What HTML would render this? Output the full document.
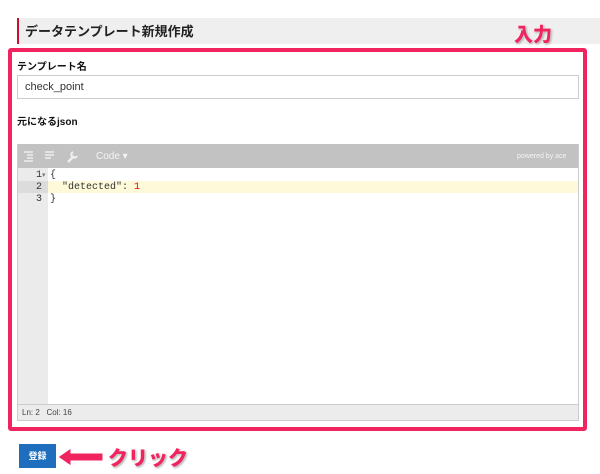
<!DOCTYPE html>
<html><head><meta charset="utf-8"><style>
body{margin:0;width:600px;height:474px;background:#fff;font-family:"Liberation Sans","Noto Sans CJK JP",sans-serif;position:relative;overflow:hidden}
.a{position:absolute}
</style></head><body>
<div class="a" style="left:17px;top:18px;width:583px;height:26px;background:#efefef;border-left:2px solid #c8102e;box-sizing:border-box"></div>
<div class="a" style="left:25px;top:21px;font-size:13px;font-weight:bold;color:#222">データテンプレート新規作成</div>
<div class="a" style="left:514px;top:20px;font-size:19px;font-weight:900;color:#f0245f;text-shadow:0 0 2px #fff,1px 1px 2px #888">入力</div>
<div class="a" style="left:8px;top:48px;width:579px;height:383px;border:4px solid #f0245f;border-radius:3px;box-sizing:border-box"></div>
<div class="a" style="left:17px;top:58px;font-size:10px;font-weight:bold;color:#111">テンプレート名</div>
<div class="a" style="left:17px;top:75px;width:562px;height:24px;border:1px solid #ccc;box-sizing:border-box;font-size:11px;color:#333;padding:5px 0 0 7px">check_point</div>
<div class="a" style="left:17px;top:113px;font-size:10px;font-weight:bold;color:#111">元になるjson</div>
<div class="a" style="left:17px;top:144px;width:562px;height:277px;border:1px solid #ccc;box-sizing:border-box;background:#fff"></div>
<div class="a" style="left:18px;top:144px;width:560px;height:24px;background:#c2c2c2"></div>
<svg class="a" style="left:22px;top:149px" width="60" height="14"><g stroke="#eee" stroke-width="1.5" fill="none"><path d="M2 3h9M5 6h6M5 9h6M2 12h9"/><path d="M23 3h9M23 6h9M23 9h6"/><path d="M46 13l6-6" stroke-width="2.5"/><path d="M51 3a3 3 0 1 0 4 4" stroke-width="2"/></g></svg>
<div class="a" style="left:96px;top:151px;font-size:10px;color:#f4f4f4">Code ▾</div>
<div class="a" style="left:517px;top:153px;font-size:7px;color:#f4f4f4">powered by ace</div>
<div class="a" style="left:18px;top:168px;width:30px;height:236px;background:#ebebeb"></div>
<div class="a" style="left:18px;top:181px;width:30px;height:12px;background:#dcdcdc"></div>
<div class="a" style="left:48px;top:181px;width:530px;height:12px;background:#fdf9d9"></div>
<div class="a" style="left:18px;top:170px;width:24px;text-align:right;font:10px/12px 'Liberation Mono',monospace;color:#333">1<br>2<br>3</div>
<div class="a" style="left:42px;top:170px;font:7px/12px sans-serif;color:#777">▾</div>
<div class="a" style="left:50px;top:170px;font:10px/12px 'Liberation Mono',monospace;color:#333;white-space:pre">{
  "detected": <span style="color:#e00">1</span>
}</div>
<div class="a" style="left:18px;top:404px;width:560px;height:16px;background:#ececec;border-top:1px solid #ccc;box-sizing:border-box;font-size:8px;color:#444;padding:3px 0 0 4px;white-space:pre">Ln: 2   Col: 16</div>
<div class="a" style="left:19px;top:444px;width:37px;height:24px;background:#1e6ebd;color:#fff;font-size:9px;font-weight:bold;text-align:center;line-height:24px">登録</div>
<svg class="a" style="left:56px;top:446px" width="50" height="22"><path d="M2 11l13-9v5h32v8H15v5z" fill="#f0245f" stroke="#fff" stroke-width="1"/></svg>
<div class="a" style="left:108px;top:442px;font-size:20px;font-weight:900;color:#f0245f;text-shadow:0 0 2px #fff,1px 1px 2px #888">クリック</div>
</body></html>
